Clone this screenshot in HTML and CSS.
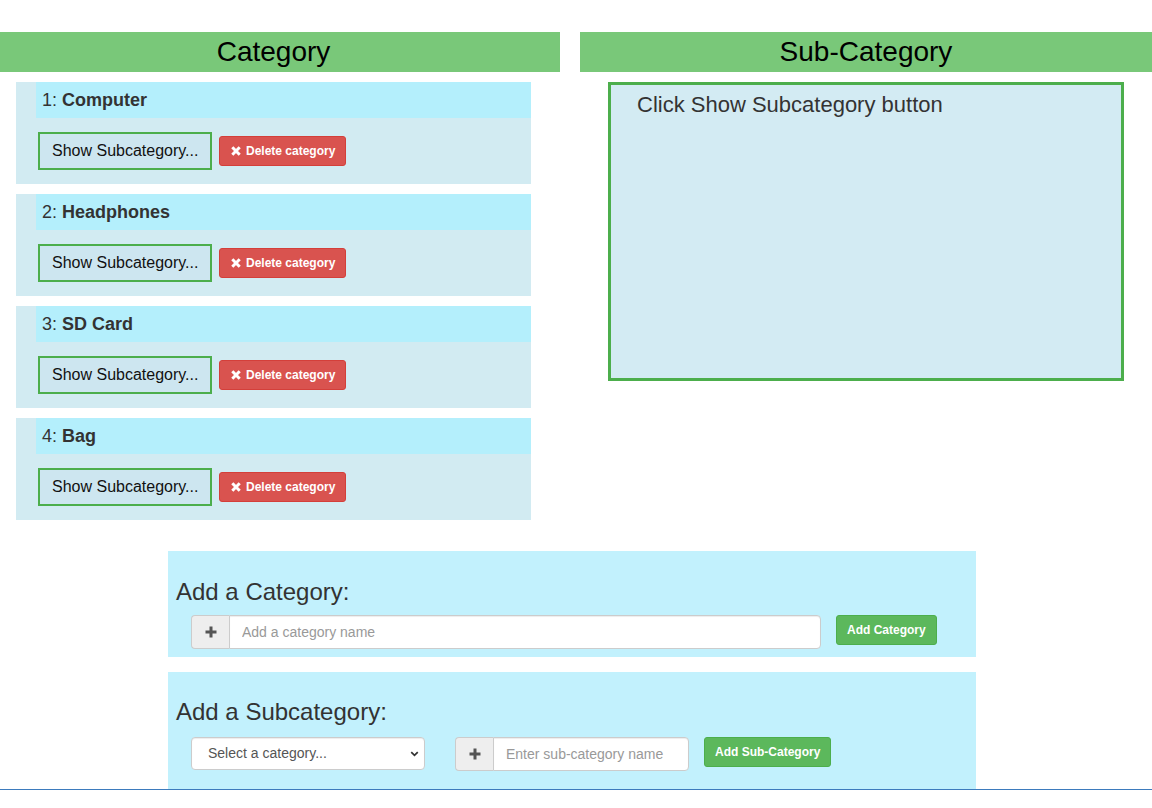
FILE: index.html
```html
<!DOCTYPE html>
<html lang="en">
<head>
<meta charset="utf-8">
<title>Categories</title>
<link rel="stylesheet" href="styles.css">
</head>
<body>
<div class="page">
  <div class="columns">
    <section class="col-left">
      <h2 class="bar bar-left">Category</h2>
      <div class="card-list">
        <div class="card">
          <div class="card-head">1: <b>Computer</b></div>
          <div class="card-actions">
            <button class="btn-show">Show Subcategory...</button>
            <button class="btn-del"><svg class="x-icon" viewBox="0 0 10 10" width="10" height="10"><path d="M1.3 1.3 L8.7 8.7 M8.7 1.3 L1.3 8.7" stroke="#fff" stroke-width="3" stroke-linecap="butt"/></svg>Delete category</button>
          </div>
        </div>
        <div class="card">
          <div class="card-head">2: <b>Headphones</b></div>
          <div class="card-actions">
            <button class="btn-show">Show Subcategory...</button>
            <button class="btn-del"><svg class="x-icon" viewBox="0 0 10 10" width="10" height="10"><path d="M1.3 1.3 L8.7 8.7 M8.7 1.3 L1.3 8.7" stroke="#fff" stroke-width="3" stroke-linecap="butt"/></svg>Delete category</button>
          </div>
        </div>
        <div class="card">
          <div class="card-head">3: <b>SD Card</b></div>
          <div class="card-actions">
            <button class="btn-show">Show Subcategory...</button>
            <button class="btn-del"><svg class="x-icon" viewBox="0 0 10 10" width="10" height="10"><path d="M1.3 1.3 L8.7 8.7 M8.7 1.3 L1.3 8.7" stroke="#fff" stroke-width="3" stroke-linecap="butt"/></svg>Delete category</button>
          </div>
        </div>
        <div class="card">
          <div class="card-head">4: <b>Bag</b></div>
          <div class="card-actions">
            <button class="btn-show">Show Subcategory...</button>
            <button class="btn-del"><svg class="x-icon" viewBox="0 0 10 10" width="10" height="10"><path d="M1.3 1.3 L8.7 8.7 M8.7 1.3 L1.3 8.7" stroke="#fff" stroke-width="3" stroke-linecap="butt"/></svg>Delete category</button>
          </div>
        </div>
      </div>
    </section>
    <section class="col-right">
      <h2 class="bar">Sub-Category</h2>
      <div class="sub-box">Click Show Subcategory button</div>
    </section>
  </div>

  <div class="forms">
    <form class="add-form form-cat">
      <h3>Add a Category:</h3>
      <div class="form-row">
        <div class="input-group ig-wide">
          <span class="addon"><svg viewBox="0 0 12 12" width="12" height="12"><rect x="4.5" y="0.5" width="3" height="11" fill="#555"/><rect x="0.5" y="4.5" width="11" height="3" fill="#555"/></svg></span>
          <input class="field" type="text" placeholder="Add a category name">
        </div>
        <button type="button" class="btn-add btn-add-cat">Add Category</button>
      </div>
    </form>
    <form class="add-form form-sub">
      <h3>Add a Subcategory:</h3>
      <div class="form-row">
        <div class="select-wrap">
          <select class="select">
            <option>Select a category...</option>
          </select>
          <svg class="chev" viewBox="0 0 10 7" width="10" height="7"><path d="M1.2 1.2 L5 5 L8.8 1.2" fill="none" stroke="#333" stroke-width="2"/></svg>
        </div>
        <div class="input-group ig-sub">
          <span class="addon"><svg viewBox="0 0 12 12" width="12" height="12"><rect x="4.5" y="0.5" width="3" height="11" fill="#555"/><rect x="0.5" y="4.5" width="11" height="3" fill="#555"/></svg></span>
          <input class="field" type="text" placeholder="Enter sub-category name">
        </div>
        <button type="button" class="btn-add btn-add-sub">Add Sub-Category</button>
      </div>
    </form>
  </div>
</div>
</body>
</html>
```

FILE: styles.css
```css
* {
  box-sizing: border-box;
}

html, body {
  margin: 0;
  padding: 0;
  background: #fff;
}

body {
  font-family: "Liberation Sans", Arial, Helvetica, sans-serif;
  font-size: 14px;
  color: #333;
}

.page {
  height: 790px;
  overflow: hidden;
  border-bottom: 1px solid #3d7bbd;
  padding-top: 32px;
}

.columns {
  display: grid;
  grid-template-columns: 560px 572px;
  column-gap: 20px;
}

.bar {
  margin: 0;
  height: 40px;
  line-height: 40px;
  background: #79c879;
  color: #000;
  font-size: 28px;
  font-weight: normal;
  text-align: center;
}

.bar-left {
  padding-right: 13px;
}

.card-list {
  padding: 10px 0 0 16px;
}

.card {
  width: 515px;
  background: #d2ebf2;
  margin-bottom: 10px;
}

.card-head {
  margin-left: 20px;
  height: 36px;
  line-height: 36px;
  padding-left: 6px;
  background: #b4effc;
  font-size: 18px;
  color: #333;
}

.card-head b {
  font-weight: bold;
}

.card-actions {
  display: flex;
  align-items: center;
  gap: 7px;
  padding: 14px 0 14px 22px;
}

.btn-show {
  width: 174px;
  height: 38px;
  padding: 0 0 0 12px;
  text-align: left;
  border: 2px solid #4cae4c;
  background: #cde6f0;
  color: #111;
  font-family: inherit;
  font-size: 16px;
  cursor: pointer;
}

.btn-del {
  display: inline-flex;
  align-items: center;
  height: 30px;
  padding: 0 10px 0 11px;
  border: 1px solid #d43f3a;
  border-radius: 3px;
  background: #d9534f;
  color: #fff;
  font-family: inherit;
  font-size: 12px;
  font-weight: bold;
  cursor: pointer;
}

.x-icon {
  width: 10px;
  height: 10px;
  margin-right: 5px;
}

.sub-box {
  margin: 10px 28px 0 28px;
  height: 299px;
  border: 3px solid #4cae4c;
  background: #d3ebf3;
  padding: 7px 26px;
  font-size: 22px;
  color: #333;
}

.forms {
  margin-top: 21px;
  margin-left: 168px;
  width: 808px;
}

.add-form {
  background: #c2f1fd;
  padding: 28px 8px 8px 8px;
  margin: 0;
}

.form-sub {
  margin-top: 15px;
  padding-top: 27px;
  min-height: 140px;
}

.add-form h3 {
  margin: 0 0 10px 0;
  font-size: 24px;
  line-height: 26.4px;
  font-weight: normal;
  color: #333;
}

.form-sub h3 {
  margin-bottom: 11px;
}

.form-row {
  display: flex;
  align-items: flex-start;
  margin-left: 15px;
}

.input-group {
  display: flex;
  height: 34px;
}

.ig-wide {
  width: 630px;
}

.ig-sub {
  width: 234px;
  margin-left: 30px;
}

.addon {
  width: 38px;
  flex: none;
  display: flex;
  align-items: center;
  justify-content: center;
  background: #eee;
  border: 1px solid #ccc;
  border-right: 0;
  border-radius: 4px 0 0 4px;
}

.field {
  flex: 1;
  min-width: 0;
  height: 34px;
  border: 1px solid #ccc;
  border-radius: 0 4px 4px 0;
  padding: 6px 12px;
  font-family: inherit;
  font-size: 14px;
  color: #555;
  background: #fff;
  box-shadow: inset 0 1px 1px rgba(0,0,0,.075);
  outline: none;
}

.field::placeholder {
  color: #999;
}

.btn-add {
  height: 30px;
  margin-left: 15px;
  padding: 0 10px;
  border: 1px solid #4cae4c;
  border-radius: 3px;
  background: #5cb85c;
  color: #fff;
  font-family: inherit;
  font-size: 12px;
  font-weight: bold;
  cursor: pointer;
}

.select-wrap {
  position: relative;
  width: 234px;
  height: 33px;
}

.select {
  appearance: none;
  -webkit-appearance: none;
  width: 100%;
  height: 33px;
  border: 1px solid #ccc;
  border-radius: 4px;
  background: #fff;
  padding: 0 12px 0 16px;
  font-family: inherit;
  font-size: 14px;
  color: #555;
  box-shadow: inset 0 1px 1px rgba(0,0,0,.075);
}

.chev {
  position: absolute;
  right: 6px;
  top: 14px;
  width: 9px;
  height: 6px;
}
```
